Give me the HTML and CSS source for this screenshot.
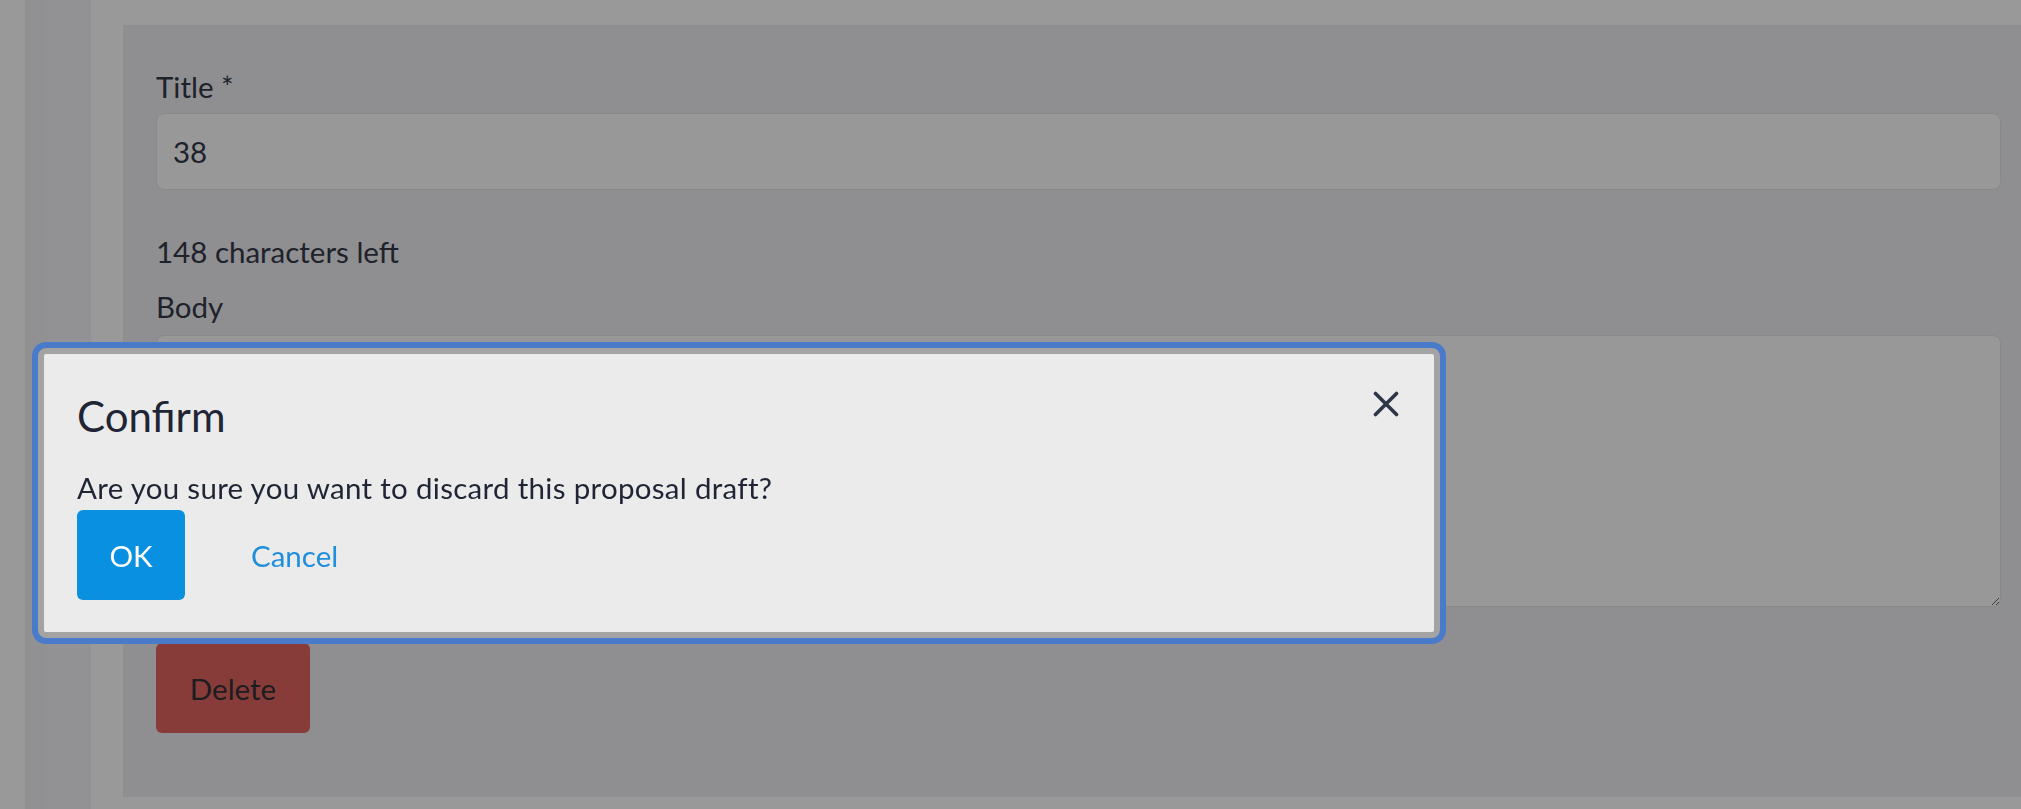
FILE: index.html
```html
<!DOCTYPE html>
<html lang="en">

<head>
    <meta charset="UTF-8">
    <meta name="viewport" content="width=device-width, initial-scale=1.0">
    <title>Edit Proposal</title>
    <link rel="stylesheet" href="styles.css">
</head>

<body>
    <div class="layout">
        <div class="gutter"></div>
        <aside class="sidebar"></aside>

        <main class="main">
            <form class="card" id="proposalForm">
                <label class="field-label" for="title">Title *</label>
                <input class="text-input" type="text" id="title" name="title" value="38">

                <p class="counter">148 characters left</p>

                <label class="field-label body-label" for="body">Body</label>
                <textarea class="text-area" id="body" name="body"></textarea>

                <button type="button" class="btn btn-delete">Delete</button>
            </form>
        </main>
    </div>

    <!-- confirm dialog -->
    <div class="backdrop"></div>
    <div class="modal" role="dialog" aria-labelledby="confirmTitle">
        <div class="modal-header">
            <h2 id="confirmTitle">Confirm</h2>
            <button type="button" class="close-btn" aria-label="Close">
                <svg width="26" height="26" viewBox="0 0 26 26">
                    <path d="M2.5 2.5 L23.5 23.5 M23.5 2.5 L2.5 23.5" stroke="#2e3546" stroke-width="3.6" stroke-linecap="round" fill="none" />
                </svg>
            </button>
        </div>
        <p class="modal-text">Are you sure you want to discard this proposal draft?</p>
        <div class="modal-actions">
            <button type="button" class="btn btn-ok">OK</button>
            <button type="button" class="btn btn-cancel">Cancel</button>
        </div>
    </div>
</body>

</html>
```

FILE: styles.css
```css
body {
    margin: 0;
    padding: 0;
    background-color: #fff;
    font-family: Lato, "Liberation Sans", sans-serif;
    font-size: 29.5px;
    color: #343949;
    overflow: hidden;
}

.layout {
    display: flex;
    min-height: 809px;
}

.gutter {
    width: 25px;
    flex-shrink: 0;
}

.sidebar {
    width: 66px;
    flex-shrink: 0;
    background-color: #f4f4f7;
    border-left: 21px solid #f2f2f5;
    box-sizing: border-box;
}

.main {
    flex: 1;
    padding-left: 32px;
    padding-top: 25px;
    min-width: 0;
}

/* Form card */
.card {
    display: flex;
    flex-direction: column;
    align-items: flex-start;
    margin-right: -13px;
    height: 772px;
    box-sizing: border-box;
    padding: 42px 33px 64px;
    background-color: #eeeef2;
}

.field-label {
    display: block;
    line-height: 39px;
    margin-bottom: 7px;
}

.text-input,
.text-area {
    width: 100%;
    box-sizing: border-box;
    border: 1px solid #e5e5ea;
    border-radius: 8px;
    background-color: #fdfdff;
    color: #343949;
    font-family: inherit;
    font-size: 29.5px;
    padding: 0 16px;
}

.text-input {
    height: 77px;
}

.counter {
    margin: 42px 0 0;
    line-height: 39px;
}

.body-label {
    margin-top: 16px;
    margin-bottom: 9px;
}

.text-area {
    height: 273px;
    resize: vertical;
}

.btn {
    border: none;
    border-radius: 6px;
    font-family: inherit;
    font-size: 29.5px;
    cursor: pointer;
    height: 90px;
    padding: 0;
}

.btn-delete {
    margin-top: 36px;
    width: 154px;
    background-color: #e16461;
    color: #313136;
}

/* Confirm dialog */
.backdrop {
    position: fixed;
    inset: 0;
    background-color: rgba(0, 0, 0, 0.4);
}

.modal {
    position: fixed;
    top: 348px;
    left: 38px;
    width: 1402px;
    box-sizing: border-box;
    padding: 38px 33px 32px;
    background-color: #ebebeb;
    border: 6px solid #a3a3a3;
    border-radius: 8px;
    outline: 6px solid #4a7bca;
    color: #1f2535;
}

.modal-header {
    display: flex;
    justify-content: space-between;
    align-items: flex-start;
}

.modal-header h2 {
    margin: 0;
    font-size: 42px;
    font-weight: 400;
    line-height: 48px;
}

.close-btn {
    background: none;
    border: none;
    padding: 0;
    margin: -1px 2px 0 0;
    width: 26px;
    height: 26px;
    cursor: pointer;
}

.close-btn svg {
    display: block;
}

.modal-text {
    margin: 28px 0 0;
    line-height: 39px;
    letter-spacing: 0.3px;
}

.modal-actions {
    display: flex;
    gap: 42px;
    margin-top: 3px;
}

.btn-ok {
    width: 108px;
    background-color: #0a90e0;
    color: #fff;
}

.btn-cancel {
    background: none;
    padding: 0 24px;
    color: #1f8fdb;
}
```
